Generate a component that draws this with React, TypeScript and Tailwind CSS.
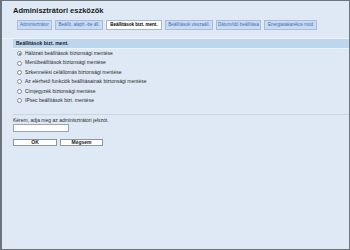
const tabs = [
  { label: 'Adminisztrátor', w: 'w-[35px]' },
  { label: 'Beállít. alaph.-be áll.', w: 'w-[48px]' },
  { label: 'Beállítások bizt. ment.', w: 'w-[56px]', active: true },
  { label: 'Beállítások visszaáll.', w: 'w-[48px]' },
  { label: 'Dátum/idő beállítása', w: 'w-[45px]' },
  { label: 'Energiatakarékos mód', w: 'w-[53px]' },
];

const options = [
  'Hálózati beállítások biztonsági mentése',
  'Menübeállítások biztonsági mentése',
  'Szkennelési célállomás biztonsági mentése',
  'Az elérhető funkciók beállításainak biztonsági mentése',
  'Címjegyzék biztonsági mentése',
  'IPsec beállítások bizt. mentése',
];

function Radio({ checked }: { checked?: boolean }) {
  return (
    <span className="flex h-[5px] w-[5px] items-center justify-center rounded-full border border-[#7d8a99] bg-white">
      {checked && <span className="h-[2px] w-[2px] rounded-full bg-[#3c8a2e]" />}
    </span>
  );
}

export default function App() {
  return (
    <div className="h-[250px] w-[350px] overflow-hidden border-l-2 border-t border-r border-b border-[#6b737c] bg-[#dee9f5] font-['Liberation_Sans',Arial,sans-serif]">
      <h1 className="ml-[11px] mt-[5px] text-[7.5px] font-bold leading-[9px] text-[#1a1a1a]">Adminisztrátori eszközök</h1>

      <div className="ml-[15px] mt-[5px] flex gap-[3px]">
        {tabs.map((t) => (
          <div
            key={t.label}
            className={
              t.active
                ? `${t.w} flex h-[10px] items-center justify-center border border-[#a9b6c4] bg-white text-[4.5px] font-bold text-black`
                : `${t.w} flex h-[10px] items-center justify-center border border-[#a9bdd6] bg-[#c8dbf1] text-[4.5px] text-[#3a6cc4]`
            }
          >
            {t.label}
          </div>
        ))}
      </div>

      <div className="mt-[8px] border-t border-[#eef3fa]" />
      <div className="ml-[11px] flex h-[9px] items-center bg-[#bcd6ee] pl-[3px] text-[5px] font-bold text-[#1a1a1a]">
        Beállítások bizt. ment.
      </div>
      <div className="ml-[11px] border-t border-[#eef3fa]" />

      <div className="ml-[15px] flex flex-col">
        {options.map((o, i) => (
          <div key={o} className="flex h-[9.4px] items-center gap-[3px] text-[5px] text-[#2a2a2a]">
            <Radio checked={i === 0} />
            <span>{o}</span>
          </div>
        ))}
      </div>

      <div className="ml-[11px] mt-[9px] border-t border-[#c9d5e3]" />

      <div className="ml-[11px] mt-[2px] text-[5px] leading-[6px] text-[#2a2a2a]">Kérem, adja meg az adminisztrátori jelszót.</div>
      <div className="ml-[11px] mt-[1px] h-[8px] w-[56px] border border-[#9aa6b3] bg-white" />

      <div className="ml-[11px] mt-[7px] flex gap-[3px]">
        <div className="flex h-[7px] w-[44px] items-center justify-center border border-[#8a96a4] bg-white text-[5px] font-bold text-[#1a1a1a]">OK</div>
        <div className="flex h-[7px] w-[43px] items-center justify-center border border-[#8a96a4] bg-white text-[5px] font-bold text-[#1a1a1a]">Mégsem</div>
      </div>
    </div>
  );
}
